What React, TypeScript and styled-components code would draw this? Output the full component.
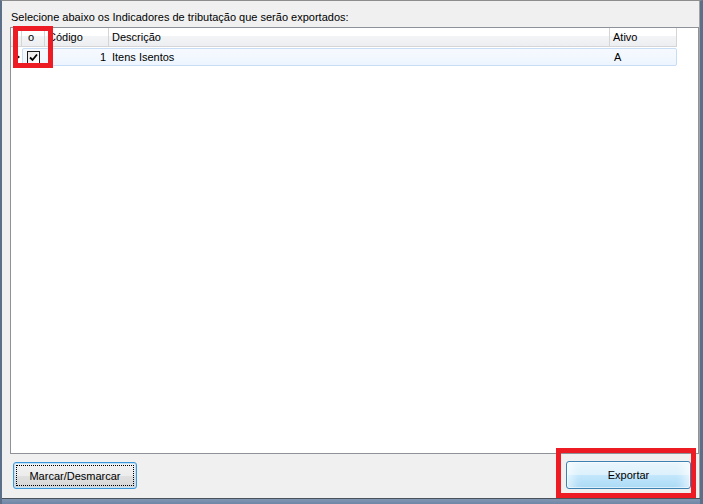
import React from "react";
import styled, { createGlobalStyle } from "styled-components";

const GlobalStyle = createGlobalStyle`
  html, body { margin: 0; padding: 0; background: #f0f0f0; }
  body { font-family: "Liberation Sans", Arial, sans-serif; font-size: 11px; color: #000; }
  * { box-sizing: border-box; }
`;

const Frame = styled.div`
  position: relative;
  width: 703px;
  height: 504px;
  display: flex;
  flex-direction: column;
  background: #f0f0f0;
  border-left: 2px solid #5b6f88;
  border-right: 3px solid #5b6f88;
  border-top: 1px solid #8d8d8d;
`;

const Body = styled.div`
  flex: 1;
  display: flex;
  flex-direction: column;
  padding: 10px 0 0 8px;
  border-right: 1px solid #a3a3a3;
`;

const BottomEdge = styled.div`
  height: 6px;
  background: linear-gradient(#4a525c 0, #4a525c 1px, #8196b1 1px, #6f86a6 100%);
`;

const Label = styled.div`
  height: 13px;
  line-height: 13px;
  padding-left: 1px;
  white-space: nowrap;
`;

const GridBox = styled.div`
  margin-top: 3px;
  height: 427px;
  border: 1px solid #8e9299;
  background: #fff;
  display: flex;
  flex-direction: column;
`;

const HeaderRow = styled.div`
  display: flex;
  height: 19px;
`;

const HeaderCell = styled.div<{ $w: number }>`
  width: ${(p) => p.$w}px;
  height: 19px;
  line-height: 18px;
  padding-left: 3px;
  border-right: 1px solid #d5d5d5;
  border-bottom: 1px solid #d5d5d5;
  background: linear-gradient(#ffffff 0%, #ffffff 45%, #f3f4f6 46%, #eceef1 100%);
  white-space: nowrap;
  overflow: hidden;
`;

const DataRow = styled.div`
  display: flex;
  height: 18px;
  margin-top: 1px;
`;

const RowHeader = styled.div`
  width: 11px;
  display: flex;
  align-items: center;
  justify-content: flex-end;
  padding-right: 1px;
`;

const Arrow = styled.div`
  width: 0;
  height: 0;
  border-top: 3.5px solid transparent;
  border-bottom: 3.5px solid transparent;
  border-left: 4px solid #000;
  margin-right: 1px;
`;

const SelectedRow = styled.div`
  width: 655px;
  display: flex;
  border: 1px solid #c7dcf5;
  border-radius: 2px;
  background: linear-gradient(#f6faff, #eef5fe);
`;

const Cell = styled.div<{ $w: number; $align?: "left" | "right" | "center" }>`
  width: ${(p) => p.$w}px;
  height: 16px;
  line-height: 16px;
  text-align: ${(p) => p.$align ?? "left"};
  padding: 0 3px;
  white-space: nowrap;
  display: flex;
  align-items: center;
  justify-content: ${(p) =>
    p.$align === "right" ? "flex-end" : p.$align === "center" ? "center" : "flex-start"};
`;

const CheckBox = styled.div`
  width: 13px;
  height: 13px;
  border: 1px solid #1e1e1e;
  background: linear-gradient(135deg, #e8e8e8, #ffffff);
  display: flex;
  align-items: center;
  justify-content: center;
  margin-left: 1px;
`;

const ButtonBar = styled.div`
  flex: 1;
  display: flex;
  align-items: flex-end;
  justify-content: space-between;
  padding: 0 8px 9px 3px;
`;

const BaseButton = styled.button`
  position: relative;
  font-family: "Liberation Sans", Arial, sans-serif;
  font-size: 11px;
  color: #000;
  border-radius: 3px;
  padding: 0;
  cursor: default;
`;

const MarkButton = styled(BaseButton)`
  width: 124px;
  height: 27px;
  border: 1px solid #3d96d8;
  background: linear-gradient(#f3f3f3 0%, #ececec 50%, #e0e0e0 51%, #d6d6d6 100%);
  box-shadow: inset 0 0 0 1px #bfe2f8;
  &::after {
    content: "";
    position: absolute;
    inset: 2px;
    border: 1px dotted #000;
  }
`;

const ExportButton = styled(BaseButton)`
  width: 125px;
  height: 28px;
  border: 1px solid #3c7fb1;
  background: linear-gradient(#eaf6fd 0%, #dcf1fc 50%, #c3e7fc 51%, #abdaf5 100%);
  box-shadow: inset 0 0 0 1px rgba(255, 255, 255, 0.55), inset 14px 0 10px -8px rgba(255, 255, 255, 0.6),
    inset -14px 0 10px -8px rgba(255, 255, 255, 0.6);
`;

const Highlight = styled.div<{ $l: number; $t: number; $w: number; $h: number }>`
  position: absolute;
  left: ${(p) => p.$l}px;
  top: ${(p) => p.$t}px;
  width: ${(p) => p.$w}px;
  height: ${(p) => p.$h}px;
  border: 5px solid #ed1c24;
  pointer-events: none;
`;

export default function App() {
  return (
    <>
      <GlobalStyle />
      <Frame>
        <Body>
          <Label>Selecione abaixo os Indicadores de tributação que serão exportados:</Label>
          <GridBox>
            <HeaderRow>
              <HeaderCell $w={11} />
              <HeaderCell $w={23}>&nbsp;o</HeaderCell>
              <HeaderCell $w={64}>Código</HeaderCell>
              <HeaderCell $w={501}>Descrição</HeaderCell>
              <HeaderCell $w={67}>Ativo</HeaderCell>
            </HeaderRow>
            <DataRow>
              <RowHeader>
                <Arrow />
              </RowHeader>
              <SelectedRow>
                <Cell $w={22}>
                  <CheckBox>
                    <svg width="9" height="9" viewBox="0 0 9 9">
                      <path d="M1 4.5 L3.5 7 L8 1.5" fill="none" stroke="#000" strokeWidth="1.8" />
                    </svg>
                  </CheckBox>
                </Cell>
                <Cell $w={64} $align="right">1</Cell>
                <Cell $w={502}>Itens Isentos</Cell>
                <Cell $w={65}>A</Cell>
              </SelectedRow>
            </DataRow>
          </GridBox>
          <ButtonBar>
            <MarkButton>Marcar/Desmarcar</MarkButton>
            <ExportButton>Exportar</ExportButton>
          </ButtonBar>
        </Body>
        <BottomEdge />
        <Highlight $l={11} $t={25} $w={40} $h={42} />
        <Highlight $l={554} $t={447} $w={140} $h={50} />
      </Frame>
    </>
  );
}
